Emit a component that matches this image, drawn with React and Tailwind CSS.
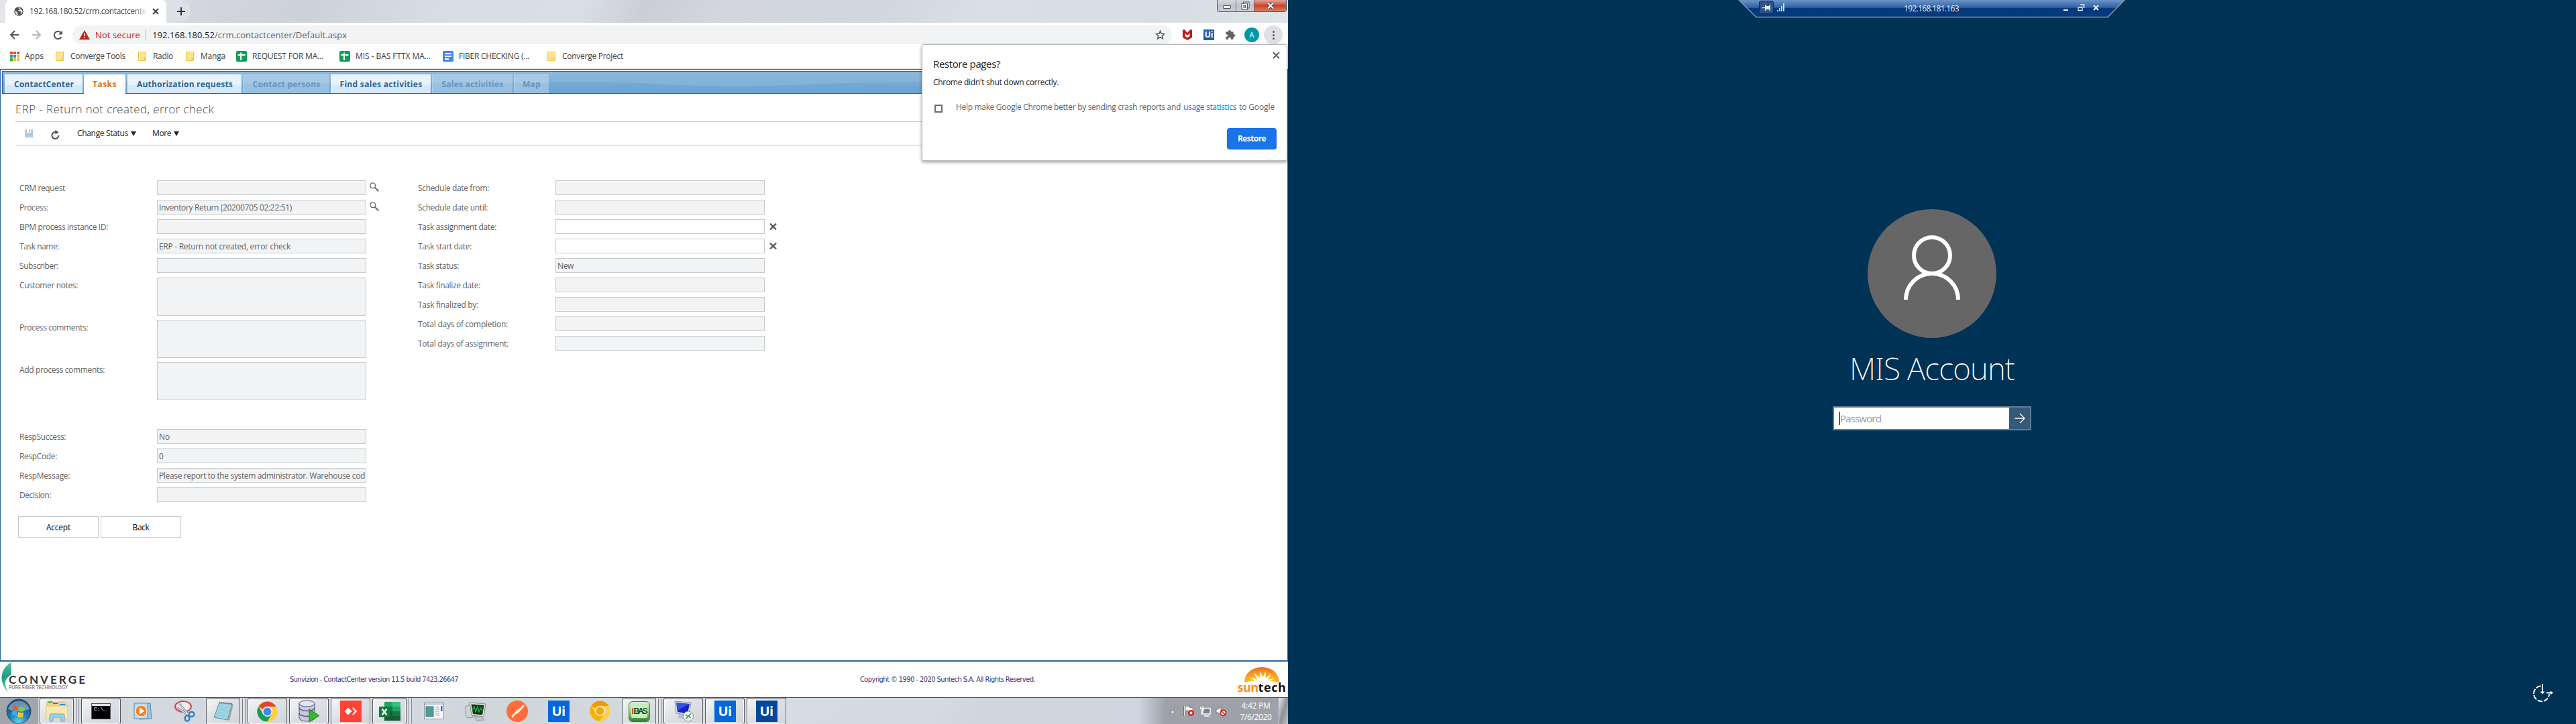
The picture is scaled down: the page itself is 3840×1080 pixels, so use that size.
import { useLayoutEffect, useRef } from "react";

/* Text set to a given width by adjusting its letter spacing. */
function Fit({ w, className = "", children }) {
  const ref = useRef(null);
  useLayoutEffect(() => {
    const el = ref.current;
    el.style.letterSpacing = "0px";
    const natural = el.getBoundingClientRect().width;
    const n = el.textContent.length;
    el.style.letterSpacing = (w - natural) / n + "px";
  }, [w]);
  return (
    <span ref={ref} className={"inline-block shrink-0 whitespace-pre " + className}>
      {children}
    </span>
  );
}

/* ---------- Browser chrome ---------- */

function WindowButtons() {
  return (
    <div className="mr-[2px] flex h-[18px] w-[104px] overflow-hidden rounded-b-[4px] border border-t-0 border-[#50555c]">
      <div className="flex w-[28px] items-center justify-center border-r border-[#6b7077] bg-linear-to-b from-[#d5d8dc] via-[#bfc3c9] via-50% to-[#cdd1d6]">
        <span className="mt-[3px] h-[5px] w-[12px] rounded-[1px] border border-[#4c5157] bg-white" />
      </div>
      <div className="flex w-[27px] items-center justify-center border-r border-[#6b7077] bg-linear-to-b from-[#d5d8dc] via-[#bfc3c9] via-50% to-[#cdd1d6]">
        <svg width="13" height="13" viewBox="0 0 13 13" fill="none">
          <rect x="3.5" y="1" width="8.5" height="9" fill="#fff" stroke="#4c5157" />
          <rect x="1" y="3.2" width="8.5" height="9" fill="#fff" stroke="#4c5157" />
          <rect x="4" y="6" width="2.6" height="3.2" fill="#c3c7cd" stroke="#4c5157" />
        </svg>
      </div>
      <div className="flex flex-1 items-center justify-center bg-linear-to-b from-[#e2a298] from-0% via-[#c8442b] via-50% to-[#de7f68]">
        <svg width="12" height="11" viewBox="0 0 12 11">
          <path d="M2 1.5 L10 9.5 M10 1.5 L2 9.5" stroke="#4a3a3a" strokeWidth="4" />
          <path d="M2 1.5 L10 9.5 M10 1.5 L2 9.5" stroke="#fff" strokeWidth="2.3" />
        </svg>
      </div>
    </div>
  );
}

function TabStrip() {
  return (
    <div className="flex h-[34px] items-start bg-[linear-gradient(112deg,#e3e6e9_0%,#dde1e5_14%,#d3d7dc_15%,#cdd2d6_24%,#d8dde1_34%,#dadfe3_45%,#cbcfd3_50%,#d3d6dd_56%,#d2d7df_68%,#d9dfe3_76%,#d8dde1_90%,#dfe4e7_100%)]">
      <div className="ml-[8px] flex h-[34px] w-[240px] items-center rounded-t-[7px] bg-white pl-[13px]">
        <svg width="14" height="14" viewBox="0 0 14 14">
          <circle cx="7" cy="7" r="6.8" fill="#4d5156" />
          <path d="M1.6 5.5 L5 8.6 V10.5 L7 12.6 C4 13 1 9.6 1.6 5.5Z M5.5 2 L8 1.3 L9.6 2 L8.4 4.4 L6.4 5 L6.2 6.6 L9.4 7 L10.4 9 L9.6 11.6 C12.4 10 13 7 12 4.6 L10.6 4.8 L9.8 3.2" fill="#fff" opacity="0.85" />
        </svg>
        <div className="ml-[9px] w-[176px] mask-r-from-88% text-[12px] leading-[16px] text-[#3c4043]">
          <Fit w={174}>192.168.180.52/crm.contactcente</Fit>
        </div>
        <svg className="ml-[7px]" width="10" height="10" viewBox="0 0 10 10">
          <path d="M1 1 L9 9 M9 1 L1 9" stroke="#3c4043" strokeWidth="1.8" />
        </svg>
      </div>
      <div className="mt-[3px] ml-[8px] flex h-[28px] w-[28px] items-center justify-center rounded-full bg-[#dde0e4]">
        <svg width="12" height="12" viewBox="0 0 12 12">
          <path d="M6 0 V12 M0 6 H12" stroke="#303336" strokeWidth="2" />
        </svg>
      </div>
      <div className="flex-1" />
      <WindowButtons />
    </div>
  );
}

function Toolbar() {
  return (
    <div className="flex h-[36px] items-center bg-white">
      <svg className="ml-[14px]" width="15" height="14" viewBox="0 0 15 14" fill="none" stroke="#505459" strokeWidth="2">
        <path d="M14 7 H2 M8 1 L2 7 L8 13" />
      </svg>
      <svg className="ml-[18px]" width="15" height="14" viewBox="0 0 15 14" fill="none" stroke="#b4b6b9" strokeWidth="2">
        <path d="M1 7 H13 M7 1 L13 7 L7 13" />
      </svg>
      <svg className="ml-[17px]" width="15" height="15" viewBox="0 0 15 15" fill="none">
        <path d="M12.4 10 A5.6 5.6 0 1 1 11.6 3.6" stroke="#505459" strokeWidth="2" />
        <path d="M14 0.6 V6.4 H8.2Z" fill="#505459" />
      </svg>
      <div className="ml-[14px] flex h-[28px] w-[624px] flex-1 items-center rounded-full bg-[#f1f3f4] pl-[10px]">
        <svg width="16" height="14" viewBox="0 0 16 14">
          <path d="M8 0 L16 14 H0Z" fill="#c5221f" />
          <path d="M8 4.8 V9 M8 10.3 V12" stroke="#fff" strokeWidth="1.6" />
        </svg>
        <div className="ml-[8px] text-[13px] leading-[18px] text-[#c5221f]"><Fit w={67}>Not secure</Fit></div>
        <div className="ml-[8px] h-[16px] w-px bg-[#a8abaf]" />
        <div className="ml-[9px] text-[13px] leading-[18px] text-[#202124]"><Fit w={93}>192.168.180.52</Fit></div>
        <div className="text-[13px] leading-[18px] text-[#5f6368]"><Fit w={197}>/crm.contactcenter/Default.aspx</Fit></div>
        <div className="flex-1" />
        <svg className="mr-[10px]" width="15" height="14" viewBox="0 0 24 23" fill="none" stroke="#505459" strokeWidth="2.4">
          <path d="M12 2 L14.8 8.6 L22 9.2 L16.6 14 L18.2 21 L12 17.2 L5.8 21 L7.4 14 L2 9.2 L9.2 8.6Z" />
        </svg>
      </div>
      <svg className="ml-[16px]" width="14" height="16" viewBox="0 0 14 16">
        <path d="M0 0.500 L2.500 0 L7 5 L11.500 0 L14 0.500 V12 L7 16 L0 12Z M3.500 5.500 V10 L7 12.200 L10.500 10 V5.500 L7 9Z" fill="#c01818" fillRule="evenodd" />
      </svg>
      <div className="ml-[17px] flex h-[16px] w-[16px] items-center justify-center bg-[#1f5fae] text-[12px] leading-[16px] font-bold text-white">Ui</div>
      <svg className="ml-[16px]" width="16" height="16" viewBox="0 0 24 24" fill="#5f6368">
        <path d="M20.5 11H19V7c0-1.1-.9-2-2-2h-4V3.5C13 2.1 11.9 1 10.500 1S8 2.100 8 3.500V5H4C2.900 5 2 5.900 2 7v3.800h1.500c1.500 0 2.700 1.200 2.700 2.700S5 16.200 3.500 16.200H2V20c0 1.100.9 2 2 2h3.800v-1.500c0-1.500 1.200-2.700 2.700-2.700s2.700 1.200 2.700 2.700V22H17c1.100 0 2-.9 2-2v-4h1.500c1.400 0 2.500-1.100 2.500-2.500S21.900 11 20.500 11z" />
      </svg>
      <div className="ml-[13px] flex h-[22px] w-[22px] items-center justify-center rounded-full bg-[#0097a7] text-[11px] text-white">A</div>
      <div className="mr-[8px] ml-[7px] flex h-[28px] w-[28px] flex-col items-center justify-center gap-[2px] rounded-full bg-[#dfe0e1]">
        <span className="h-[3px] w-[3px] rounded-full bg-[#505459]" />
        <span className="h-[3px] w-[3px] rounded-full bg-[#505459]" />
        <span className="h-[3px] w-[3px] rounded-full bg-[#505459]" />
      </div>
    </div>
  );
}

function Folder() {
  return (
    <svg className="mx-[2px]" width="12" height="14" viewBox="0 0 12 14">
      <path d="M0.5 0.5 H11.5 V9.500 L10 13.500 H0.500Z" fill="#ffe48f" stroke="#e9c644" />
      <path d="M9 13.500 V10 Q9 9 11.500 8.500 V13.500Z" fill="#f5d15c" stroke="#e9c644" strokeWidth="0.6" />
    </svg>
  );
}

function SheetIcon() {
  return (
    <svg width="16" height="16" viewBox="0 0 16 16">
      <rect width="16" height="16" rx="2" fill="#0f9d58" />
      <path d="M7 2.500 V13.500 M2.500 6 H13.500" stroke="#fff" strokeWidth="2.200" />
    </svg>
  );
}

function DocIcon() {
  return (
    <svg width="16" height="16" viewBox="0 0 16 16">
      <rect width="16" height="16" rx="2" fill="#4285f4" />
      <path d="M3 4 H13 M3 8 H13 M3 12 H9" stroke="#fff" strokeWidth="2" />
    </svg>
  );
}

function AppsIcon() {
  const c = ["#ea4335", "#ea4335", "#ea4335", "#34a853", "#4285f4", "#fbbc04", "#34a853", "#fbbc04", "#fbbc04"];
  return (
    <svg width="14" height="14" viewBox="0 0 14 14">
      {c.map((f, i) => (
        <rect key={i} x={(i % 3) * 5} y={Math.floor(i / 3) * 5} width="4" height="4" fill={f} />
      ))}
    </svg>
  );
}

function Bookmark({ icon, w, next, children }) {
  return (
    <div className={"flex items-center " + next}>
      {icon}
      <Fit w={w} className="ml-[8px]">{children}</Fit>
    </div>
  );
}

function Bookmarks() {
  return (
    <div className="flex h-[33px] items-start border-b border-[#d7d9db] bg-white pl-[15px] text-[12px] leading-[28px] text-[#3c4043]">
      <Bookmark icon={<AppsIcon />} w={28} next="mr-[16px]">Apps</Bookmark>
      <Bookmark icon={<Folder />} w={82} next="mr-[17px]">Converge Tools</Bookmark>
      <Bookmark icon={<Folder />} w={30} next="mr-[17px]">Radio</Bookmark>
      <Bookmark icon={<Folder />} w={37} next="mr-[16px]">Manga</Bookmark>
      <Bookmark icon={<SheetIcon />} w={106} next="mr-[24px]">REQUEST FOR MA...</Bookmark>
      <Bookmark icon={<SheetIcon />} w={112} next="mr-[18px]">MIS - BAS FTTX MA...</Bookmark>
      <Bookmark icon={<DocIcon />} w={105} next="mr-[25px]">FIBER CHECKING (...</Bookmark>
      <Bookmark icon={<Folder />} w={91} next="">Converge Project</Bookmark>
    </div>
  );
}

function RestorePopup() {
  return (
    <div className="absolute top-[66px] left-[1374px] h-[174px] w-[545px] rounded-[3px] border border-[#b5b7ba] bg-white pl-[16px] text-[#202124] shadow-[0_2px_5px_rgba(0,0,0,0.4)]">
      <svg className="absolute top-[10px] left-[522px]" width="11" height="11" viewBox="0 0 11 11">
        <path d="M1 1 L10 10 M10 1 L1 10" stroke="#5f6368" strokeWidth="2" />
      </svg>
      <div className="mt-[18px] text-[15px] leading-[20px]"><Fit w={100}>Restore pages?</Fit></div>
      <div className="mt-[9px] text-[12px] leading-[18px]"><Fit w={187}>Chrome didn't shut down correctly.</Fit></div>
      <div className="mt-[19px] flex items-center text-[12px] leading-[18px] text-[#5f6368]">
        <span className="mt-[3px] mr-[20px] ml-[2px] h-[12px] w-[12px] border-2 border-[#6a6d71] bg-white" />
        <Fit w={335}>Help make Google Chrome better by sending crash reports and</Fit>
        <Fit w={79} className="ml-[4px] text-[#1a73e8]">usage statistics</Fit>
        <Fit w={53} className="ml-[4px]">to Google</Fit>
      </div>
      <div className="mt-[22px] ml-[438px] flex h-[32px] w-[74px] items-center justify-center rounded-[4px] bg-[#1a73e8] text-[12px] font-bold text-white">
        <Fit w={42}>Restore</Fit>
      </div>
    </div>
  );
}

/* ---------- Application page ---------- */

function AppTabs() {
  const on = "bg-linear-to-b from-[#e9f3fb] from-50% to-[#d6e9f8] to-60% text-[#2b659b] border-t border-l border-[#f5fbff]";
  const off = "bg-linear-to-b from-[#a8c9e4] from-40% to-[#98c0e0] to-50% text-[#6397c4] border-t border-l border-[#b3d0e8]";
  const base = "relative flex h-[28px] shrink-0 items-center justify-center ";
  return (
    <div className="relative ml-[2px] flex h-[34px] w-[1915px] items-end border border-[#2c659a] bg-linear-to-b from-[#8bb7db] to-[#6ba3d1] pl-[3px] text-[12px] leading-[16px] font-bold">
      <svg className="absolute inset-0" width="1913" height="32" viewBox="0 0 1913 32">
        <defs>
          <linearGradient id="waveTop" gradientUnits="userSpaceOnUse" x1="0" y1="0" x2="0" y2="22">
            <stop offset="0" stopColor="#8bb7db" />
            <stop offset="1" stopColor="#81b1d8" />
          </linearGradient>
          <linearGradient id="waveBottom" gradientUnits="userSpaceOnUse" x1="0" y1="14" x2="0" y2="32">
            <stop offset="0" stopColor="#76abd5" />
            <stop offset="1" stopColor="#6ba3d2" />
          </linearGradient>
        </defs>
        <rect width="1913" height="32" fill="url(#waveTop)" />
        <path d="M0 15 H860 C960 15 990 21.500 1080 21.500 C1180 21.500 1230 15.500 1370 15.500 H1913 V32 H0Z" fill="url(#waveBottom)" />
      </svg>
      <div className={base + "w-[116px] " + on}><Fit w={89}>ContactCenter</Fit></div>
      <div className="relative -mb-px ml-[2px] flex h-[29px] w-[62px] shrink-0 items-center justify-center bg-white text-[#e06f0c]"><Fit w={36}>Tasks</Fit></div>
      <div className={base + "ml-[3px] w-[170px] " + on}><Fit w={143}>Authorization requests</Fit></div>
      <div className={base + "ml-[2px] w-[129px] " + off}><Fit w={101}>Contact persons</Fit></div>
      <div className={base + "ml-[2px] w-[149px] " + on}><Fit w={123}>Find sales activities</Fit></div>
      <div className={base + "ml-[2px] w-[120px] " + off}><Fit w={92}>Sales activities</Fit></div>
      <div className={base + "ml-[2px] w-[52px] " + off}><Fit w={27}>Map</Fit></div>
    </div>
  );
}

function Down() {
  return (
    <svg width="8" height="7" viewBox="0 0 8 7">
      <path d="M0 0 H8 L4 7Z" fill="#222" />
    </svg>
  );
}

function ActionBar() {
  return (
    <div className="mr-[20px] ml-[22px] flex h-[36px] items-center border-y border-[#c8c8c8] text-[12px] leading-[16px] text-[#222]">
      <svg className="ml-[14px]" width="12" height="12" viewBox="0 0 12 12">
        <path d="M0 0 H3 V5 H9 V0 H12 V12 H0Z" fill="#b0cbe2" />
        <path d="M6 0 H8 V4 H6Z" fill="#b0cbe2" />
      </svg>
      <svg className="mt-[4px] ml-[27px]" width="13" height="14" viewBox="0 0 13 14" fill="none">
        <path d="M7 3 A5 5 0 1 0 11.400 8" stroke="#4c4c4c" strokeWidth="2" />
        <path d="M6.500 0 L11.500 3.200 L6.500 6.500Z" fill="#4c4c4c" />
      </svg>
      <Fit w={76} className="mr-[4px] ml-[26px]">Change Status</Fit>
      <Down />
      <Fit w={28} className="mr-[4px] ml-[24px]">More</Fit>
      <Down />
    </div>
  );
}

function Search() {
  return (
    <svg className="-mt-[2px] ml-[5px] shrink-0" width="14" height="14" viewBox="0 0 14 14" fill="none" stroke="#666">
      <circle cx="4.700" cy="4.700" r="3.900" strokeWidth="1.300" />
      <path d="M7.500 7.500 L13.300 13.300" strokeWidth="2" />
    </svg>
  );
}

function Clear() {
  return (
    <svg className="ml-[7px] shrink-0" width="11" height="10" viewBox="0 0 11 10">
      <path d="M1 0.600 L10 9.400 M10 0.600 L1 9.400" stroke="#5c5c5c" strokeWidth="2.300" />
    </svg>
  );
}

function Row({ label, lw, value, vw, tall, white, extra }) {
  return (
    <div className="flex items-start">
      <div className="flex h-[22px] w-[205px] shrink-0 items-center pt-px"><Fit w={lw}>{label}</Fit></div>
      <div
        className={
          "flex w-[312px] shrink-0 items-center overflow-hidden border border-[#c8c9ca] pt-px pl-[2px] " +
          (tall ? "h-[57px] " : "h-[22px] ") +
          (white ? "bg-white" : "bg-[#f2f3f5]")
        }
      >
        {value && <Fit w={vw}>{value}</Fit>}
      </div>
      <div className="flex h-[22px] items-center">{extra}</div>
    </div>
  );
}

function Form() {
  return (
    <div className="mt-[52px] flex text-[12px] leading-[18px] text-[#5f5f5f]">
      <div className="ml-[28px] flex w-[594px] flex-col gap-[7px]">
        <Row label="CRM request" lw={68} extra={<Search />} />
        <Row label="Process:" lw={43} value="Inventory Return (20200705 02:22:51)" vw={198} extra={<Search />} />
        <Row label="BPM process instance ID:" lw={132} />
        <Row label="Task name:" lw={59} value="ERP - Return not created, error check" vw={196} />
        <Row label="Subscriber:" lw={58} />
        <div className="flex flex-col gap-[6px]">
          <Row label="Customer notes:" lw={87} tall />
          <Row label="Process comments:" lw={102} tall />
          <Row label="Add process comments:" lw={127} tall />
        </div>
        <div className="mt-[36px] flex flex-col gap-[7px]">
          <Row label="RespSuccess:" lw={69} value="No" vw={16} />
          <Row label="RespCode:" lw={56} value="0" vw={7} />
          <Row label="RespMessage:" lw={75} value="Please report to the system administrator. Warehouse cod" vw={307} />
          <Row label="Decision:" lw={47} />
        </div>
      </div>
      <div className="flex flex-col gap-[7px]">
        <Row label="Schedule date from:" lw={106} />
        <Row label="Schedule date until:" lw={104} />
        <Row label="Task assignment date:" lw={117} white extra={<Clear />} />
        <Row label="Task start date:" lw={80} white extra={<Clear />} />
        <Row label="Task status:" lw={61} value="New" vw={24} />
        <Row label="Task finalize date:" lw={93} />
        <Row label="Task finalized by:" lw={90} />
        <Row label="Total days of completion:" lw={134} />
        <Row label="Total days of assignment:" lw={135} />
      </div>
    </div>
  );
}

function ConvergeLogo() {
  return (
    <div className="flex h-[53px] w-[130px] items-start">
      <svg className="mt-[1px] ml-[2px] shrink-0" width="15" height="46" viewBox="0 0 15 46">
        <defs>
          <linearGradient id="leaf" x1="0" y1="0" x2="0" y2="1">
            <stop offset="0" stopColor="#4dbf9c" />
            <stop offset="0.5" stopColor="#1b9c83" />
            <stop offset="1" stopColor="#7fd6bd" />
          </linearGradient>
        </defs>
        <path d="M14.500 0 C-2 10 -5 30 11 45.500 C4 34 3 26 15 18Z" fill="url(#leaf)" />
      </svg>
      <div className="mt-[20px] -ml-[4px] flex flex-col font-['Lato']">
        <Fit w={117} className="text-[17px] leading-[14px] font-bold text-[#333]">CONVERGE</Fit>
        <Fit w={117} className="text-[7px] leading-[8px] font-bold text-[#888]">PURE FIBER TECHNOLOGY</Fit>
      </div>
    </div>
  );
}

function SuntechLogo() {
  return (
    <div className="mt-[8px] mr-[2px] flex w-[74px] flex-col items-center">
      <svg width="52" height="23" viewBox="0 0 52 23">
        <defs>
          <radialGradient id="sun" cx="0.5" cy="1" r="1">
            <stop offset="0.300" stopColor="#fdc62a" />
            <stop offset="0.700" stopColor="#f68b1f" />
            <stop offset="1" stopColor="#ec6a1c" />
          </radialGradient>
        </defs>
        <path d="M0 22.500 A26 22.500 0 0 1 52 22.500Z" fill="url(#sun)" />
        <path d="M0 22.800 L16 20.500 L7 15 L19 18.500 L14 8 L22.500 16.500 L24 5 L27 16 L32 6 L31.500 17 L40 10 L35 19 L45 17 L37 21 L52 22.800Z" fill="#fff" />
      </svg>
      <div className="-mt-[4px] flex text-[18px] leading-[22px] font-bold text-[#111] font-['Open_Sans']">
        <Fit w={31} className="text-[#f5921e]">sun</Fit>
        <Fit w={42}>tech</Fit>
      </div>
    </div>
  );
}

function Page() {
  return (
    <div className="flex h-[937px] w-[1920px] flex-col">
      <div className="flex h-[884px] flex-col border-x border-t border-b-2 border-[#2c659a] bg-white pt-[2px]">
        <AppTabs />
        <div className="ml-[22px] flex h-[41px] items-center pt-[5px] text-[17px] leading-[22px] font-extralight text-[#111] font-['Noto_Sans']">
          <Fit w={296}>ERP - Return not created, error check</Fit>
        </div>
        <ActionBar />
        <Form />
        <div className="mt-[21px] ml-[26px] flex gap-[3px] text-[12px] text-black">
          <div className="flex h-[32px] w-[120px] items-center justify-center border border-[#c8c9ca] pt-[2px]"><Fit w={36}>Accept</Fit></div>
          <div className="flex h-[32px] w-[120px] items-center justify-center border border-[#c8c9ca] pt-[2px]"><Fit w={25}>Back</Fit></div>
        </div>
      </div>
      <div className="flex h-[53px] bg-white text-[11px] leading-[14px] text-[#3d3580] font-['DejaVu_Sans_Condensed','DejaVu_Sans',sans-serif]">
        <ConvergeLogo />
        <Fit w={251} className="mt-[20px] ml-[302px]">Sunvizion - ContactCenter version 11.5 build 7423.26647</Fit>
        <Fit w={261} className="mt-[20px] ml-[599px]">Copyright © 1990 - 2020 Suntech S.A. All Rights Reserved.</Fit>
        <div className="flex-1" />
        <SuntechLogo />
      </div>
    </div>
  );
}

/* ---------- Taskbar ---------- */

const glass = "border border-b-0 border-[#55585e] rounded-[3px] bg-linear-to-br from-[#f4f5f6] via-[#dcdfe3] to-[#d2d6dc] shadow-[inset_0_0_0_1px_rgba(255,255,255,0.65)]";

function Slot({ open, stack, children }) {
  if (stack) {
    return (
      <div className="flex h-[39px] w-[62px] shrink-0 pl-[2px]">
        <div className={"flex w-[51px] items-center justify-center " + glass}>{children}</div>
        <div className="w-[4px] rounded-r-[2px] border-r border-[#777b82] bg-[#dfe2e6]" />
        <div className="w-[4px] rounded-r-[2px] border-r border-[#84888f] bg-[#dfe2e6]" />
      </div>
    );
  }
  return (
    <div className="flex h-[39px] w-[62px] shrink-0 pr-[1px] pl-[2px]">
      <div className={"flex flex-1 items-center justify-center " + (open ? glass : "")}>{children}</div>
    </div>
  );
}

function StartOrb() {
  return (
    <svg width="38" height="38" viewBox="0 0 38 38">
      <defs>
        <radialGradient id="orb" cx="0.5" cy="0.95" r="0.9">
          <stop offset="0" stopColor="#5ce0f5" />
          <stop offset="0.450" stopColor="#1f7bb0" />
          <stop offset="1" stopColor="#1a4a78" />
        </radialGradient>
      </defs>
      <circle cx="19" cy="19" r="18" fill="url(#orb)" stroke="#274a68" />
      <path d="M3 16 A16.500 16.500 0 0 1 35 16 Q19 22 3 16Z" fill="#fff" opacity="0.350" />
      <path d="M11 11 Q15 9 18 11 L17 18 Q13 16 9.500 18Z" fill="#ef5a24" />
      <path d="M19.500 11.500 Q23 14 28 12 L26.500 19 Q22 20.500 18.500 18.500Z" fill="#8cc63e" />
      <path d="M9 19.500 Q13 17.500 16.800 19.500 L15.500 26 Q12 24 8 26Z" fill="#3fa9ee" />
      <path d="M18.200 20 Q22 22 26.200 20.500 L25 27.500 Q20.500 29 16.900 26.700Z" fill="#fdc82f" />
    </svg>
  );
}

function ExplorerIcon() {
  return (
    <svg width="34" height="32" viewBox="0 0 34 32">
      <path d="M2 3 Q2 1 4 1 H10 L12 4 H18 L20 2 H28 L32 6 V26 H2Z" fill="#f0d58a" stroke="#c9a54e" strokeWidth="0.700" />
      <rect x="4" y="1.500" width="6" height="2" fill="#3aa935" />
      <rect x="11" y="3" width="7" height="2" fill="#d2412f" />
      <rect x="21" y="5" width="8" height="2" fill="#2f8ed2" />
      <path d="M1 8 H33 V27 H1Z" fill="#fae9ac" stroke="#d9bd69" strokeWidth="0.700" />
      <path d="M6 22 Q6 20 8 20 H26 Q28 20 28 22 V31 H23 V25 H11 V31 H6Z" fill="#9ed3ef" stroke="#5aa6d0" />
    </svg>
  );
}

function CmdIcon() {
  return (
    <div className="flex h-[24px] w-[29px] flex-col border border-[#555] bg-black">
      <div className="h-[3px] bg-[#dfe3e8]" />
      <span className="pl-[3px] text-[8px] leading-[10px] text-white font-['Liberation_Mono']">C:\_</span>
    </div>
  );
}

function MediaIcon() {
  return (
    <svg width="28" height="26" viewBox="0 0 28 26">
      <path d="M9 3 L25 1 L27 24 L9 25Z" fill="#9cc4df" stroke="#5a8db3" />
      <rect x="1" y="1" width="20" height="23" fill="#b7d8ec" stroke="#5a92bd" />
      <circle cx="11.500" cy="12.500" r="8.500" fill="#f58220" stroke="#fff" />
      <path d="M9 7.500 L16.500 12.500 L9 17.500Z" fill="#fff" />
    </svg>
  );
}

function SnipIcon() {
  return (
    <svg width="32" height="32" viewBox="0 0 32 32" fill="none">
      <ellipse cx="14" cy="9" rx="12" ry="8" fill="#f3ecee" stroke="#cf4653" strokeWidth="2" />
      <path d="M7 3 L22 21 M4 10 L21 21" stroke="#7d838c" strokeWidth="3" />
      <path d="M7 3 L22 21 M4 10 L21 21" stroke="#e8ebee" strokeWidth="1.200" />
      <ellipse cx="26.500" cy="20.500" rx="4" ry="3.500" stroke="#2f7fc4" strokeWidth="2.400" />
      <ellipse cx="20" cy="26.500" rx="3.300" ry="4.300" stroke="#2f7fc4" strokeWidth="2.400" />
    </svg>
  );
}

function NotepadIcon() {
  return (
    <svg width="32" height="30" viewBox="0 0 32 30">
      <path d="M26 3 L31 5 L25 29 L19 27Z" fill="#a9a9a2" />
      <path d="M10 2 L29 4 L22 28 L2 24Z" fill="#9fd4e4" stroke="#5790a6" />
      <path d="M10 8 L26 10 M9 12 L25 14 M8 16 L23 18 M6 20 L22 22" stroke="#8cc6d9" />
      <path d="M10 2 L29 4" stroke="#777" strokeWidth="2.500" strokeDasharray="1.500 1.500" />
    </svg>
  );
}

function ChromeIcon({ a, b, c, mid, size }) {
  return (
    <svg width={size} height={size} viewBox="0 0 32 32">
      <circle cx="16" cy="16" r="15.500" fill={c} />
      <path d="M16 16 L2.600 8.200 A15.500 15.500 0 0 1 29.400 8.200 H16Z" fill={a} />
      <path d="M2.600 8.200 A15.500 15.500 0 0 0 16 31.500 L22.800 19.800 L16 16 L9.200 19.700Z" fill={b} />
      <path d="M16 8.200 H29.400 A15.500 15.500 0 0 1 16 31.500 L22.800 19.800Z" fill={c} />
      <circle cx="16" cy="16" r="7.800" fill="#fff" opacity="0.950" />
      <circle cx="16" cy="16" r="6.200" fill={mid} />
    </svg>
  );
}

function DatabaseIcon() {
  return (
    <svg width="32" height="34" viewBox="0 0 32 34">
      <path d="M1 5 V27 A11.500 5 0 0 0 24 27 V5Z" fill="#c9c9de" stroke="#51517a" />
      <path d="M1 12 A11.500 4.500 0 0 0 24 12 M1 20 A11.500 4.500 0 0 0 24 20" fill="none" stroke="#51517a" strokeWidth="1.300" />
      <ellipse cx="12.500" cy="5.500" rx="11.500" ry="4.500" fill="#e4e4f0" stroke="#51517a" />
      <path d="M16 14 L31 23.500 L16 33Z" fill="#3db52e" stroke="#1f7a1a" />
    </svg>
  );
}

function AnyDeskIcon() {
  return (
    <svg width="32" height="32" viewBox="0 0 32 32">
      <rect width="32" height="32" fill="#ff4436" />
      <path d="M12 10.500 L17.500 16 L12 21.500 L6.500 16Z" fill="#fff" />
      <path d="M17.500 10.500 L19.500 10.500 L25.500 16 L19.500 21.500 H17.500 L22 16Z" fill="#fff" />
    </svg>
  );
}

function ExcelIcon() {
  return (
    <svg width="32" height="28" viewBox="0 0 32 28">
      <rect x="8" width="24" height="28" rx="1" fill="#21a366" />
      <rect x="20" width="12" height="7" fill="#33c481" />
      <rect x="8" y="7" width="12" height="7" fill="#107c41" />
      <rect x="8" y="14" width="24" height="14" fill="#185c37" />
      <rect x="20" y="14" width="12" height="7" fill="#107c41" />
      <rect y="7" width="16" height="16" rx="1" fill="#107c41" />
      <path d="M4.500 10.500 L11.500 19.500 M11.500 10.500 L4.500 19.500" stroke="#fff" strokeWidth="2.300" />
    </svg>
  );
}

function ServerIcon() {
  return (
    <svg width="30" height="25" viewBox="0 0 30 25">
      <rect x="0.500" y="0.500" width="29" height="24" fill="#f6f7f8" stroke="#8a929b" />
      <rect x="1" y="1" width="28" height="3" fill="#cdd5de" />
      <rect x="3" y="6" width="11" height="15" fill="#4f9c91" stroke="#3c7f9c" />
      <path d="M17 7 H23 M17 10 H23 M17 13 H23 M17 16 H23 M17 19 H23" stroke="#9aa0a6" />
      <rect x="25" y="5" width="2.500" height="8" fill="#2f6fc4" />
    </svg>
  );
}

function MonitorIcon() {
  return (
    <svg width="32" height="30" viewBox="0 0 32 30">
      <path d="M1 8 L8 5 L12 24 L4 25 L1 22Z" fill="#d0d3d4" stroke="#7b8083" strokeWidth="0.800" />
      <path d="M14 23 L24 22 L29 28 L17 29Z" fill="#c0c4c6" stroke="#7b8083" strokeWidth="0.600" />
      <path d="M7 2 L31 4 L28 23 L10 21Z" fill="#dfe1e2" stroke="#85898c" />
      <path d="M9.500 4.500 L28.500 6 L26 20.500 L12 19Z" fill="#0d3c15" />
      <path d="M11 13 L14 8 L16 16 L19 8 L21 16 L24 10 L26 15" fill="none" stroke="#2fb842" strokeWidth="1.200" />
    </svg>
  );
}

function PostmanIcon() {
  return (
    <svg width="32" height="32" viewBox="0 0 32 32">
      <circle cx="16" cy="16" r="16" fill="#ff6c37" />
      <path d="M25 6 L27 8 L17 19 L12 21 L14 17Z" fill="#fff" opacity="0.900" />
      <path d="M8 25 L18 13 M20 14 L25 8" stroke="#fff" strokeWidth="2" fill="none" />
      <path d="M16 15 L21 10" stroke="#ff6c37" />
    </svg>
  );
}

function UiPathIcon({ bg }) {
  return (
    <div className={"flex h-[32px] w-[32px] items-center justify-center text-[20px] leading-[32px] font-bold text-white font-['Open_Sans'] " + bg}>
      <Fit w={20}>Ui</Fit>
    </div>
  );
}

function IbasIcon() {
  return (
    <div className="flex h-[31px] w-[32px] items-center justify-center rounded-[6px] border border-[#33853a] bg-linear-to-b from-[#d7f2d4] via-[#8fd47f] to-[#2b8232]">
      <div className="flex h-[20px] w-[24px] items-center justify-center rounded-[2px] bg-[#c9ecbd] text-[12px] leading-[20px] font-bold text-[#144f1d] font-['Liberation_Sans']">
        <Fit w={3} className="text-[#c02a1c]">i</Fit>
        <Fit w={19}>BAS</Fit>
      </div>
    </div>
  );
}

function RdpIcon() {
  return (
    <svg width="32" height="32" viewBox="0 0 32 32">
      <path d="M9 20 L20 22 L18 28 L8 26Z" fill="#bcc1c7" />
      <path d="M3 1 L27 3 L24 22 L5 19Z" fill="#e2e5e9" stroke="#8a9099" />
      <path d="M5 3 L25 5 L22 20 L7 17Z" fill="#1424c8" />
      <path d="M5 3 L25 5 L8 14Z" fill="#4a66ea" opacity="0.700" />
      <circle cx="23" cy="23.500" r="7.500" fill="#f1f3f3" stroke="#8a9099" />
      <path d="M19 21 L22.500 24 L19.500 27.500 M27 19.500 L23.500 22.500 L26.500 26" fill="none" stroke="#2fa338" strokeWidth="1.600" />
    </svg>
  );
}

function Tray() {
  return (
    <div className="flex h-[39px] w-[222px] items-center bg-linear-to-r from-transparent from-0% to-[#9ea2a8] to-18%">
      <svg className="ml-[46px]" width="8" height="6" viewBox="0 0 8 6">
        <path d="M0.500 5.500 H7.500 L4 1Z" fill="#fff" stroke="#555" strokeWidth="0.600" />
      </svg>
      <svg className="ml-[12px]" width="17" height="17" viewBox="0 0 17 17">
        <path d="M2 1 V16" stroke="#4a4a4a" strokeWidth="3" />
        <path d="M2 1 V16" stroke="#fff" strokeWidth="1.600" />
        <path d="M3 2 Q6 0 8 2.500 Q11 4.500 14 3 V9 Q11 10.500 8 8.500 Q6 7 3 8.500Z" fill="#fff" stroke="#4a4a4a" strokeWidth="0.600" />
        <circle cx="11.500" cy="11.500" r="4.500" fill="#d21f1f" />
        <path d="M9.800 9.800 L13.200 13.200 M13.200 9.800 L9.800 13.200" stroke="#fff" strokeWidth="1.300" />
      </svg>
      <svg className="ml-[7px]" width="17" height="16" viewBox="0 0 17 16">
        <rect x="5" y="3.500" width="11" height="8.500" fill="#7c8187" stroke="#fff" strokeWidth="1.400" />
        <path d="M7 15 H15 M2 1 V5 M5 1 V5 M1 4.500 H6 V7 H3.500 V13" stroke="#fff" strokeWidth="1.400" fill="none" />
      </svg>
      <svg className="ml-[7px]" width="17" height="17" viewBox="0 0 17 17">
        <path d="M1 6 H4 L8 2 V15 L4 11 H1Z" fill="#fff" stroke="#4a4a4a" strokeWidth="0.700" />
        <circle cx="11.500" cy="11.500" r="4" fill="#fff" stroke="#d21f1f" strokeWidth="1.800" />
        <path d="M8.800 9 L14.200 14" stroke="#d21f1f" strokeWidth="1.700" />
      </svg>
      <div className="ml-[19px] flex w-[48px] flex-col items-center text-[12px] leading-[17px] text-white">
        <Fit w={43}>4:42 PM</Fit>
        <Fit w={47}>7/6/2020</Fit>
      </div>
      <div className="ml-auto h-[39px] w-[14px] border-l border-[#d8dbde] bg-linear-to-br from-[#e6e8ea] via-[#8e9298] to-[#c3c6ca]" />
    </div>
  );
}

function Taskbar() {
  return (
    <div className="flex h-[40px] w-[1920px] border-t border-[#54505a] bg-[linear-gradient(115deg,#d2d6dd_0%,#d5d9e0_30%,#cfd5d9_38%,#d6dce0_60%,#d5dae3_72%,#d0d6da_76%,#d0d4e0_88%,#c8cdd6_100%)]">
      <div className="flex h-[39px] w-[57px] shrink-0 items-center justify-center bg-[#a2a6ab] pr-[2px]"><StartOrb /></div>
      <Slot stack><ExplorerIcon /></Slot>
      <Slot open><CmdIcon /></Slot>
      <Slot><MediaIcon /></Slot>
      <Slot><SnipIcon /></Slot>
      <Slot stack><NotepadIcon /></Slot>
      <Slot open><ChromeIcon a="#db4437" b="#0f9d58" c="#ffcd40" mid="#4285f4" size={31} /></Slot>
      <Slot open><DatabaseIcon /></Slot>
      <Slot open><AnyDeskIcon /></Slot>
      <Slot stack><ExcelIcon /></Slot>
      <Slot><ServerIcon /></Slot>
      <Slot><MonitorIcon /></Slot>
      <Slot><PostmanIcon /></Slot>
      <Slot><UiPathIcon bg="bg-[#0067df]" /></Slot>
      <Slot><ChromeIcon a="#f29900" b="#f5b400" c="#ffd04d" mid="#f5a70a" size={31} /></Slot>
      <Slot stack><IbasIcon /></Slot>
      <Slot open><RdpIcon /></Slot>
      <Slot open><UiPathIcon bg="bg-[#0067df]" /></Slot>
      <Slot open><UiPathIcon bg="bg-[#00489d]" /></Slot>
      <div className="flex-1" />
      <Tray />
    </div>
  );
}

/* ---------- Remote session ---------- */

function ConnectionBar() {
  return (
    <div className="relative flex h-[27px] w-[578px] items-start pl-[31px]">
      <svg className="absolute inset-0" width="578" height="27" viewBox="0 0 578 27">
        <defs>
          <linearGradient id="bar" x1="0" y1="0" x2="0" y2="1">
            <stop offset="0" stopColor="#7199cb" />
            <stop offset="0.470" stopColor="#2c60a3" />
            <stop offset="0.480" stopColor="#04397c" />
            <stop offset="1" stopColor="#033a7f" />
          </linearGradient>
        </defs>
        <path d="M0 -1 L27 25.500 H551 L577 -1Z" fill="url(#bar)" stroke="#8496ac" strokeWidth="1.500" />
      </svg>
      <div className="relative mt-[1px] flex h-[20px] w-[22px] items-center justify-center rounded-[3px] border border-[#12294c] bg-[#2e5483]">
        <svg width="12" height="11" viewBox="0 0 12 11" fill="#e6ebf2">
          <path d="M0 5 H4 V1 H5.500 V3 H10.500 V1 H12 V10 H10.500 V8 H5.500 V10 H4 V6.200 H0Z" />
        </svg>
      </div>
      <svg className="relative mt-[5px] ml-[5px]" width="12" height="12" viewBox="0 0 12 12" fill="#c9d6e8">
        <path d="M0 10 H2 V12 H0Z M3 7 H5 V12 H3Z M6 4 H8 V12 H6Z M9 0 H11 V12 H9Z" />
      </svg>
      <Fit w={82} className="relative mt-[4px] ml-[177px] text-[12px] leading-[17px] text-[#e8eef7]">192.168.181.163</Fit>
      <svg className="relative mt-[5px] ml-[156px]" width="56" height="14" viewBox="0 0 56 14" fill="none" stroke="#e8eef7">
        <path d="M0 10 H7" strokeWidth="2" />
        <path d="M25 2 H30.500 V7" strokeWidth="1.600" />
        <path d="M22 6 H28 V10.500 H22Z" strokeWidth="1.300" />
        <path d="M45 3 L52 10 M52 3 L45 10" strokeWidth="2.200" />
      </svg>
    </div>
  );
}

function RemoteSession() {
  return (
    <div className="flex h-[1080px] w-[1920px] flex-col items-center bg-[#003256]">
      <ConnectionBar />
      <div className="mt-[285px] flex h-[192px] w-[192px] items-center justify-center rounded-full bg-[#666]">
        <svg width="192" height="192" viewBox="0 0 192 192" fill="none" stroke="#fff" strokeWidth="6">
          <circle cx="96" cy="69" r="27" />
          <path d="M57 135 A39 39 0 0 1 135 135" />
        </svg>
      </div>
      <div className="mt-[17px] text-[46px] leading-[56px] font-extralight text-white font-['Noto_Sans']"><Fit w={246}>MIS Account</Fit></div>
      <div className="mt-[29px] flex h-[36px] w-[296px] border-2 border-[#5f7d95]">
        <div className="flex flex-1 items-center bg-white pl-[8px]">
          <span className="h-[20px] w-px bg-black" />
          <Fit w={61} className="text-[15px] leading-[20px] text-[#999]">Password</Fit>
        </div>
        <div className="flex w-[31px] items-center justify-center bg-[#335a78]">
          <svg width="16" height="16" viewBox="0 0 16 16" fill="none" stroke="#fff" strokeWidth="1.300">
            <path d="M0.500 8 H15 M8 1 L15 8 L8 15" />
          </svg>
        </div>
      </div>
      <div className="mt-auto mr-[33px] mb-[32px] self-end">
        <svg width="32" height="28" viewBox="0 0 32 28" fill="none" stroke="#fff" strokeWidth="2">
          <path d="M12.500 3.300 A11.500 11.500 0 1 0 25 15.500" strokeDasharray="7.600 2" />
          <path d="M15 0 V14 M21 13.500 H29" />
          <path d="M11.500 11.500 H18.500 L15 15.500Z M27 10.500 L31 13.500 L27 16.500Z" fill="#fff" stroke="none" />
        </svg>
      </div>
    </div>
  );
}

export default function App() {
  return (
    <div className="flex h-[1080px] w-[3840px] overflow-hidden bg-[#003256] font-['Open_Sans','Noto_Sans',sans-serif]">
      <div className="relative flex h-[1080px] w-[1920px] shrink-0 flex-col">
        <TabStrip />
        <Toolbar />
        <Bookmarks />
        <Page />
        <Taskbar />
        <RestorePopup />
      </div>
      <RemoteSession />
    </div>
  );
}
